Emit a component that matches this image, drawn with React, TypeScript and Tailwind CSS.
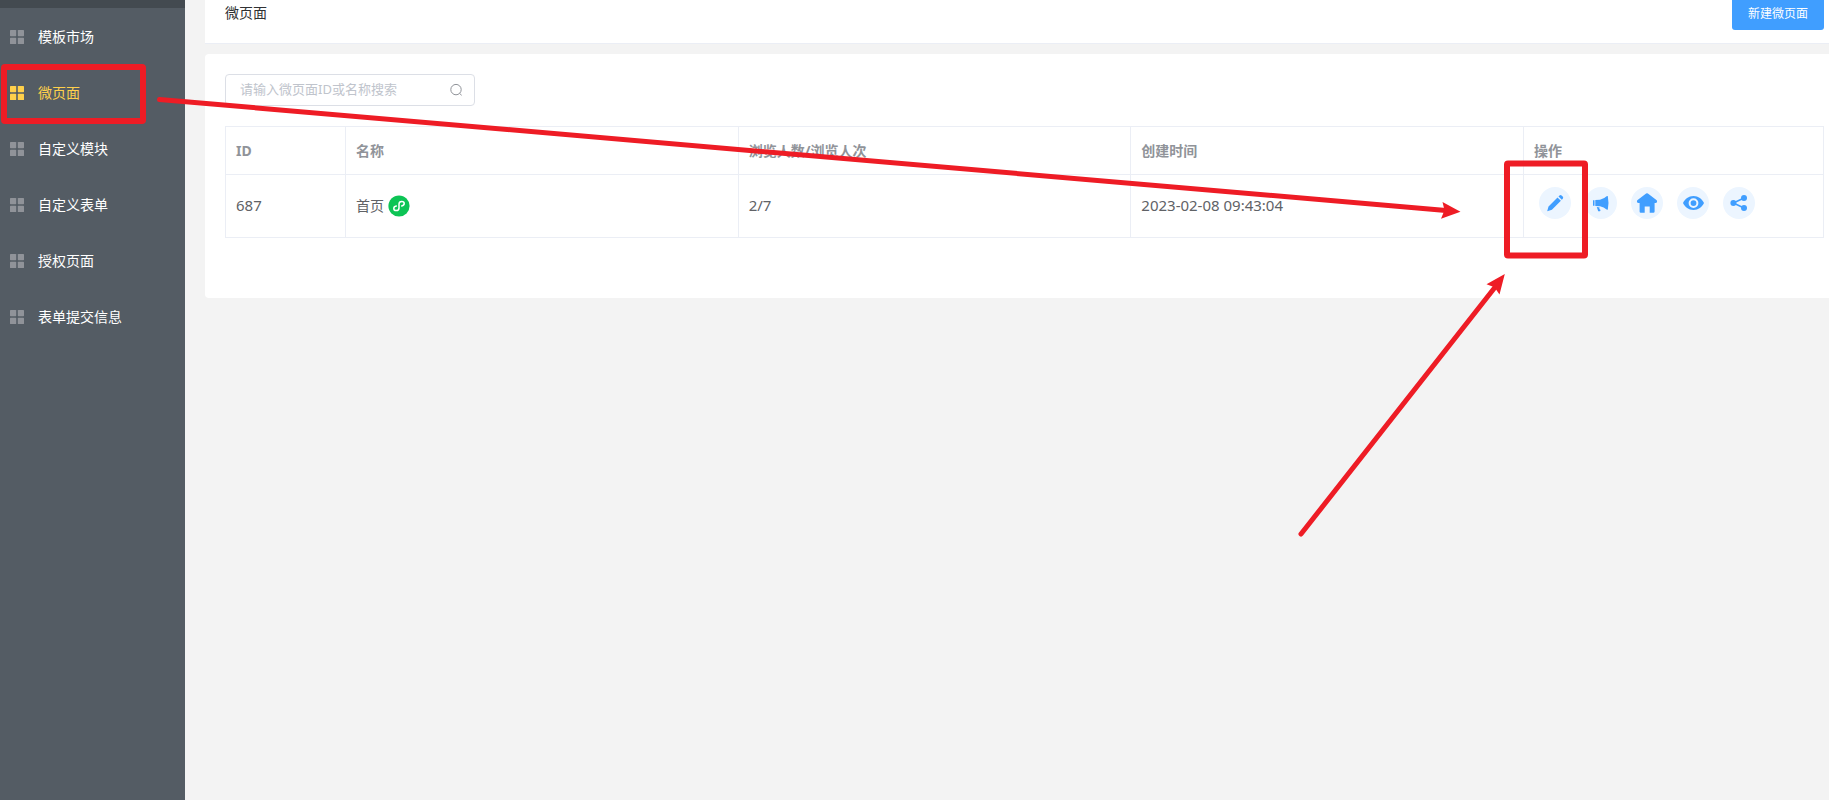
import React from "react";

/******************************************************************************
                            DATA
******************************************************************************/
const menuItems = [
  { label: "模板市场", active: false },
  { label: "微页面", active: true },
  { label: "自定义模块", active: false },
  { label: "自定义表单", active: false },
  { label: "授权页面", active: false },
  { label: "表单提交信息", active: false },
];

const pages = [
  { id: 687, name: "首页", views: "2/7", createdAt: "2023-02-08 09:43:04" },
];

const columns = ["ID", "名称", "浏览人数/浏览人次", "创建时间", "操作"];

/******************************************************************************
                            ICONS
******************************************************************************/
const GridIcon = () => (
  <svg className="size-[14px] shrink-0" viewBox="0 0 14 14" fill="currentColor" aria-hidden="true">
    <rect width="6.2" height="6.2" rx="0.6" />
    <rect x="7.8" width="6.2" height="6.2" rx="0.6" />
    <rect y="7.8" width="6.2" height="6.2" rx="0.6" />
    <rect x="7.8" y="7.8" width="6.2" height="6.2" rx="0.6" />
  </svg>
);

const SearchIcon = () => (
  <svg className="size-[14px] shrink-0" viewBox="0 0 14 14" fill="none" stroke="currentColor" aria-hidden="true">
    <circle cx="7" cy="6.6" r="5.2" />
    <path d="M10.600 10.400 12.700 12.300" />
  </svg>
);

const MiniProgramIcon = () => (
  <svg className="size-[22px] shrink-0" viewBox="0 0 22 22" fill="none" aria-hidden="true">
    <circle cx="11" cy="11" r="10.6" fill="#0dc455" />
    <path
      d="M8.300 11.100c-1.500.3-2.500 1.200-2.500 2.400 0 1.200 1 2.100 2.400 2.100 1.600 0 2.800-1.100 2.800-2.600V9c0-1.500 1.200-2.600 2.800-2.600 1.400 0 2.400.9 2.400 2.100 0 1.200-1 2.100-2.500 2.400"
      stroke="#fff"
      strokeWidth="1.5"
      strokeLinecap="round"
    />
  </svg>
);

const PencilIcon = () => (
  <path d="M8.200 24.200 9.500 19.400 18.500 10.400 21.900 13.800 12.900 22.700ZM19.500 9.400 20.500 8.400Q21.500 7.500 22.600 8.500L23.700 9.600Q24.700 10.700 23.800 11.700L22.800 12.800Z" />
);

const MegaphoneIcon = () => (
  <path d="M8 13.200h1.500v5.600H8ZM10.300 12.900 15 12.700Q19 12 21.600 9.300L22.800 9Q24.200 16 22.800 22.800L21.600 22.500Q19 19.900 15 19.200L10.300 19ZM11.800 20 14.600 20.400 14.300 21.900 15.600 23 15 24.300H13.200Z" />
);

const HomeIcon = () => (
  <path d="M15.100 6.500Q16 5.800 16.900 6.500L25.700 13.200Q26.400 14 25.900 15.300Q25.600 16 24.600 16H23.600V24.500Q23.600 25.700 22.400 25.700H18.700V19.500H13.700V25.700H9.800Q8.600 25.700 8.600 24.500V16H7.400Q6.400 16 6.100 15.300Q5.600 14 6.300 13.200Z" />
);

const EyeIcon = () => (
  <>
    <path
      fillRule="evenodd"
      d="M16.500 9C11.500 9 8 12 6 16.100 8 20.200 11.500 23 16.500 23S25 20.200 27 16.100C25 12 21.500 9 16.500 9ZM16.500 11.200a4.900 4.900 0 1 1 0 9.800a4.900 4.900 0 0 1 0-9.800Z"
    />
    <circle cx="16.5" cy="16.1" r="2.9" />
  </>
);

const ShareIcon = () => (
  <>
    <path d="M21 11 10.400 16 21 21" fill="none" stroke="currentColor" strokeWidth="1.6" />
    <circle cx="21" cy="10.900" r="3" />
    <circle cx="10.400" cy="16" r="3" />
    <circle cx="21" cy="21.100" r="3" />
  </>
);

const actions = [
  { label: "编辑", icon: <PencilIcon /> },
  { label: "推广", icon: <MegaphoneIcon /> },
  { label: "设为首页", icon: <HomeIcon /> },
  { label: "预览", icon: <EyeIcon /> },
  { label: "分享", icon: <ShareIcon /> },
];

/******************************************************************************
                            GUIDE MARKS
******************************************************************************/
const GuideMarks = () => (
  <svg
    className="pointer-events-none absolute top-0 left-0 h-[560px] w-[1620px]"
    viewBox="0 0 1620 560"
    fill="none"
    stroke="#ee1c25"
    aria-hidden="true"
  >
    <rect x="4" y="67" width="139" height="54" rx="1" strokeWidth="6" />
    <rect x="1507" y="163.500" width="78" height="92" rx="1" strokeWidth="6" />
    <path d="M159.500 99.500 1446 210.500" strokeWidth="5" strokeLinecap="round" />
    <path d="M1460.500 211.800 1442.500 202 1444.500 210.300 1441 218.700Z" fill="#ee1c25" stroke="none" />
    <path d="M1301 534 1496 286" strokeWidth="5" strokeLinecap="round" />
    <path d="M1504.800 274 1486.500 284.300 1494.500 287.200 1499.500 294.600Z" fill="#ee1c25" stroke="none" />
  </svg>
);

/******************************************************************************
                            COMPONENT
******************************************************************************/
const App: React.FC = () => {
  return (
    <div className="relative flex min-h-screen bg-[#f3f3f3] font-['Noto_Sans','Noto_Sans_CJK_SC',sans-serif] text-sm text-[#606266]">
      {/* Sidebar */}
      <aside className="w-[185px] shrink-0 bg-[#545c64]">
        <div className="h-2 bg-[#434a50]" />
        <nav className="pt-px">
          {menuItems.map((item) => (
            <a
              key={item.label}
              href="#"
              className={`flex h-14 items-center gap-[14px] pl-[10px] ${
                item.active ? "text-[#ffd04b]" : "text-white"
              }`}
            >
              <span className={item.active ? "text-[#ffd04b]" : "text-[#909399]"}>
                <GridIcon />
              </span>
              {item.label}
            </a>
          ))}
        </nav>
      </aside>

      <main className="min-w-0 flex-1 pl-5">
        {/* Page header */}
        <header className="flex h-11 items-start justify-between border-b border-[#ebeef5] bg-white pr-[5px] pl-5">
          <h1 className="pt-[3px] text-[#303133]">微页面</h1>
          <button
            type="button"
            className="h-[30px] rounded-b-[3px] bg-[#409eff] px-4 pb-0.5 text-xs text-white"
          >
            新建微页面
          </button>
        </header>

        {/* Page list */}
        <section className="mt-[10px] rounded-l bg-white pt-5 pr-[5px] pb-[60px] pl-5">
          <label className="flex h-8 w-[250px] items-center rounded border border-[#dcdfe6] pr-[11px] pl-[14px] text-[#909399]">
            <input
              type="text"
              aria-label="搜索微页面"
              placeholder="请输入微页面ID或名称搜索"
              className="min-w-0 flex-1 pb-0.5 text-[13px] text-[#606266] outline-none placeholder:text-[#c0c4cc]"
            />
            <SearchIcon />
          </label>

          <table className="mt-5 w-full table-fixed border-collapse border border-[#ebeef5] text-left">
            <colgroup>
              <col className="w-[120px]" />
              <col />
              <col />
              <col />
              <col className="w-[300px]" />
            </colgroup>
            <thead>
              <tr className="h-12">
                {columns.map((column) => (
                  <th key={column} className="border border-[#ebeef5] px-[10px] font-bold text-[#909399]">
                    {column}
                  </th>
                ))}
              </tr>
            </thead>
            <tbody>
              {pages.map((page) => (
                <tr key={page.id} className="h-[63px]">
                  <td className="border border-[#ebeef5] px-[10px] text-[15px]">{page.id}</td>
                  <td className="border border-[#ebeef5] px-[10px]">
                    <span className="flex items-center gap-1">
                      {page.name}
                      <MiniProgramIcon />
                    </span>
                  </td>
                  <td className="border border-[#ebeef5] px-[10px] text-[15px]">{page.views}</td>
                  <td className="border border-[#ebeef5] px-[10px] text-[15px]">{page.createdAt}</td>
                  <td className="border border-[#ebeef5] px-[15px] pb-[6px]">
                    <div className="flex gap-[14px]">
                      {actions.map((action) => (
                        <button
                          key={action.label}
                          type="button"
                          aria-label={action.label}
                          className="size-8 rounded-full bg-[#ecf5ff] text-[#409eff]"
                        >
                          <svg className="size-8" viewBox="0 0 32 32" fill="currentColor" aria-hidden="true">
                            {action.icon}
                          </svg>
                        </button>
                      ))}
                    </div>
                  </td>
                </tr>
              ))}
            </tbody>
          </table>
        </section>
      </main>

      <GuideMarks />
    </div>
  );
};

export default App;
